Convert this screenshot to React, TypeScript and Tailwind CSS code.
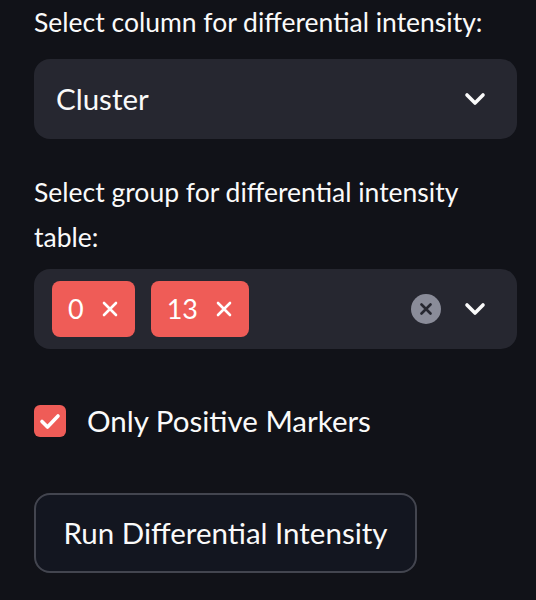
import React from 'react';

const Chevron: React.FC = () => (
  <svg width="22" height="14" viewBox="0 0 22 14" fill="none">
    <path d="M3 3l8 8 8-8" stroke="#fafafa" strokeWidth="3.6" strokeLinecap="round" strokeLinejoin="round" />
  </svg>
);

const TagX: React.FC = () => (
  <svg width="16" height="16" viewBox="0 0 16 16" fill="none">
    <path d="M2 2l12 12M14 2L2 14" stroke="#fff" strokeWidth="2.6" strokeLinecap="round" />
  </svg>
);

const Tag: React.FC<{ label: string }> = ({ label }) => (
  <div className="flex h-[56px] items-center gap-[18px] rounded-[8px] bg-[#ef5c57] pl-[16px] pr-[17px] text-[27px] text-white">
    <span>{label}</span>
    <TagX />
  </div>
);

export default function App() {
  return (
    <div
      className="min-h-screen w-[536px] bg-[#111218] pl-[34px] pr-[19px] text-[#fafafa]"
      style={{ fontFamily: '"Source Sans Pro", Lato, "Noto Sans", sans-serif' }}
    >
      <div className="flex flex-col">
        <label className="mb-[14px] text-[26.5px] leading-[45px]">Select column for differential intensity:</label>
        <div className="flex h-[80px] items-center justify-between rounded-[16px] bg-[#262730] pl-[22px] pr-[31px]">
          <span className="text-[29.5px]">Cluster</span>
          <Chevron />
        </div>

        <label className="mb-[9px] mt-[31px] w-[440px] text-[26.5px] leading-[45px]">
          Select group for differential intensity table:
        </label>
        <div className="flex h-[80px] items-center rounded-[16px] bg-[#262730] pl-[18px] pr-[31px]">
          <div className="flex flex-1 items-center gap-[16px]">
            <Tag label="0" />
            <Tag label="13" />
          </div>
          <div className="flex items-center gap-[23px]">
            <div className="flex h-[30px] w-[30px] items-center justify-center rounded-full bg-[#8a8c99]">
              <svg width="12" height="12" viewBox="0 0 12 12" fill="none">
                <path d="M1.5 1.5l9 9M10.5 1.5l-9 9" stroke="#262730" strokeWidth="2.6" strokeLinecap="round" />
              </svg>
            </div>
            <Chevron />
          </div>
        </div>

        <div className="mt-[56px] flex items-center gap-[21px]">
          <div className="flex h-[32px] w-[32px] items-center justify-center rounded-[6px] bg-[#ef5c57]">
            <svg width="22" height="18" viewBox="0 0 22 18" fill="none">
              <path d="M3 9.5l5.5 5.5L19 4" stroke="#fff" strokeWidth="3.6" strokeLinecap="round" strokeLinejoin="round" />
            </svg>
          </div>
          <span className="text-[29.5px] leading-[32px]">Only Positive Markers</span>
        </div>

        <button className="mt-[56px] flex h-[80px] w-[383px] items-center justify-center rounded-[16px] border-2 border-[#43454f] bg-[#131620] text-[29.5px] text-[#fafafa]">
          Run Differential Intensity
        </button>
      </div>
    </div>
  );
}
